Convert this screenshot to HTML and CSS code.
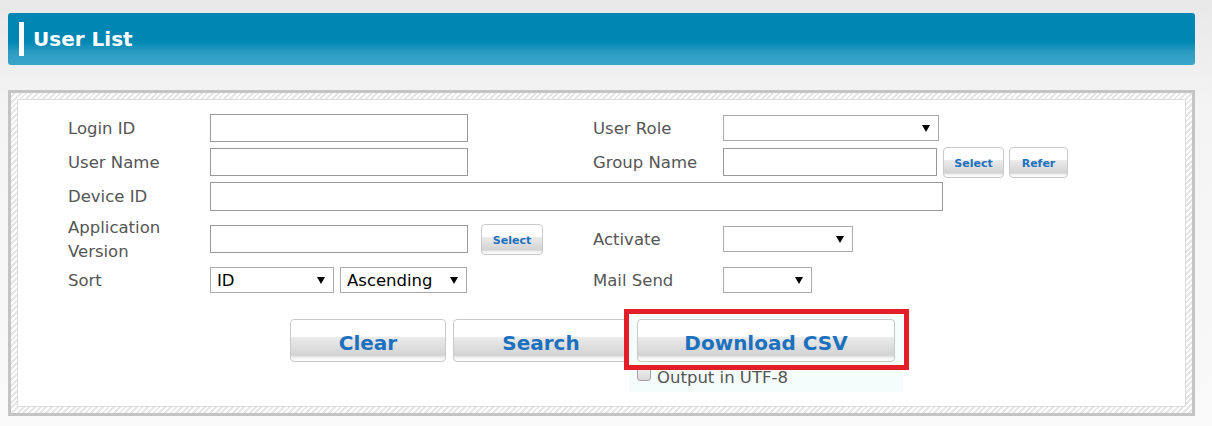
FILE: index.html
```html
<!DOCTYPE html>
<html lang="en">
  <head>
    <meta charset="UTF-8" />
    <meta name="viewport" content="width=device-width, initial-scale=1.0" />
    <title>User List</title>
    <link rel="stylesheet" href="styles.css">
  </head>
  <body>
    <div class="page">
      <h1 class="title-bar"><span class="title-mark"></span>User List</h1>

      <div class="panel">
        <div class="panel-inner">
          <div class="form-grid">
            <label class="lbl">Login ID</label>
            <div class="field"><input type="text" class="txt txt-md" /></div>
            <label class="lbl">User Role</label>
            <div class="field"><span class="sel" style="width:216px"><select></select></span></div>

            <label class="lbl">User Name</label>
            <div class="field"><input type="text" class="txt txt-md" /></div>
            <label class="lbl">Group Name</label>
            <div class="field">
              <input type="text" class="txt txt-group" />
              <button class="btn-sm btn-sm-group">Select</button>
              <button class="btn-sm btn-refer">Refer</button>
            </div>

            <label class="lbl">Device ID</label>
            <div class="field field-wide"><input type="text" class="txt txt-wide" /></div>

            <label class="lbl lbl-2">Application Version</label>
            <div class="field">
              <input type="text" class="txt txt-md" />
              <button class="btn-sm btn-sm-app">Select</button>
            </div>
            <label class="lbl">Activate</label>
            <div class="field"><span class="sel" style="width:130px"><select></select></span></div>

            <label class="lbl">Sort</label>
            <div class="field field-sort">
              <span class="sel" style="width:124px"><select><option>ID</option></select></span>
              <span class="sel" style="width:127px"><select><option>Ascending</option></select></span>
            </div>
            <label class="lbl">Mail Send</label>
            <div class="field"><span class="sel" style="width:89px"><select></select></span></div>
          </div>

          <div class="actions">
            <button class="btn btn-clear">Clear</button>
            <button class="btn btn-search">Search</button>
            <div class="csv-cell">
              <button class="btn btn-csv">Download CSV</button>
              <label class="utf"><input type="checkbox" class="chk" />Output in UTF-8</label>
              <div class="highlight"></div>
            </div>
          </div>
        </div>
      </div>
    </div>
  </body>
</html>
```

FILE: styles.css
```css
html, body {
  margin: 0;
  padding: 0;
}

body {
  background: linear-gradient(#e8e8e8 0, #f4f4f4 110px, #f9f9f9 426px);
  font-family: "DejaVu Sans", Verdana, sans-serif;
  height: 426px;
  overflow: hidden;
}

.page {
  margin: 0 17px 0 8px;
  padding-top: 13px;
}

.title-bar {
  display: flex;
  align-items: center;
  height: 52px;
  margin: 0;
  border-radius: 3px;
  background: linear-gradient(#0086b3 0, #0086b3 55%, #2d9cc2 75%, #3ba4c8 100%);
  color: #fff;
  font-size: 20px;
  font-weight: bold;
}

.title-mark {
  width: 5px;
  height: 34px;
  margin: 0 9px 0 11px;
  background: #fff;
}

.panel {
  margin-top: 25px;
  border: 3px solid #c4c4c4;
  padding: 6px;
  background: repeating-linear-gradient(135deg, #fff 0, #fff 2px, #e6e6e6 2px, #e6e6e6 4px);
}

.panel-inner {
  background: #fff;
  border: 1px solid #dcdcdc;
  padding: 14px 0 14px 50px;
}

.form-grid {
  display: grid;
  grid-template-columns: 142px 383px 130px 1fr;
  grid-template-rows: 28px 28px 29px 44px 26px;
  row-gap: 6px;
  align-items: center;
}

.lbl {
  color: #555;
  font-size: 16.5px;
  line-height: 24px;
  padding-top: 1px;
}

.lbl-2 {
  width: 110px;
}

.field {
  display: flex;
  align-items: center;
  height: 100%;
}

.field-wide {
  grid-column: 2 / 5;
}

.field-sort {
  gap: 6px;
}

.txt {
  box-sizing: border-box;
  height: 28px;
  border: 1px solid #999;
  margin: 0;
  padding: 0 4px;
  font: 16px "DejaVu Sans", sans-serif;
}

.txt-md {
  width: 258px;
}

.txt-group {
  width: 214px;
}

.txt-wide {
  width: 733px;
  height: 29px;
}

.sel {
  position: relative;
  display: inline-block;
  height: 26px;
}

.sel select {
  appearance: none;
  -webkit-appearance: none;
  box-sizing: border-box;
  width: 100%;
  height: 26px;
  margin: 0;
  border: 1px solid #aaa;
  border-radius: 0;
  background: #fff;
  padding: 0 0 0 6px;
  color: #000;
  font: 16.5px "DejaVu Sans", sans-serif;
}

.sel::after {
  content: "";
  position: absolute;
  right: 9px;
  top: 10px;
  border-left: 4px solid transparent;
  border-right: 4px solid transparent;
  border-top: 7px solid #000;
  pointer-events: none;
}

.btn,
.btn-sm {
  box-sizing: border-box;
  margin: 0;
  border: 1px solid #c9c9c9;
  border-radius: 4px;
  background: linear-gradient(#fff 0, #fff 40%, #ebebeb 42%, #d3d3d3 86%, #f2f2f2 92%, #fff 100%);
  color: #1c71bf;
  font-family: "DejaVu Sans", Verdana, sans-serif;
  font-weight: bold;
  cursor: pointer;
}

.btn {
  height: 43px;
  font-size: 20px;
  padding: 4px 0 0;
}

.btn-sm {
  height: 31px;
  font-size: 11px;
  padding: 3px 0 0;
}

.btn-sm-app {
  width: 62px;
  margin-left: 13px;
}

.btn-sm-group {
  width: 61px;
  margin-left: 6px;
}

.btn-refer {
  width: 59px;
  margin-left: 5px;
}

.actions {
  display: flex;
  align-items: flex-start;
  margin-top: 20px;
  padding-left: 222px;
}

.btn-clear {
  width: 156px;
  margin-top: 6px;
  margin-right: 7px;
}

.btn-search {
  width: 176px;
  margin-top: 6px;
}

.csv-cell {
  position: relative;
  width: 274px;
  box-sizing: border-box;
  padding: 6px 8px 0;
  background: #f4fcfc;
}

.btn-csv {
  width: 258px;
}

.utf {
  display: flex;
  align-items: center;
  height: 29px;
  margin-top: 1px;
  color: #555;
  font-size: 16.5px;
}

.chk {
  appearance: none;
  -webkit-appearance: none;
  box-sizing: border-box;
  width: 14px;
  height: 14px;
  margin: -8px 6px 0 0;
  border: 1px solid #a3a3a3;
  border-radius: 3px;
  background: linear-gradient(#f0f0f0, #d8d8d8);
}

.highlight {
  position: absolute;
  left: -5px;
  top: -4px;
  width: 285px;
  height: 61px;
  box-sizing: border-box;
  border: 5px solid #e41e26;
  pointer-events: none;
}
```
